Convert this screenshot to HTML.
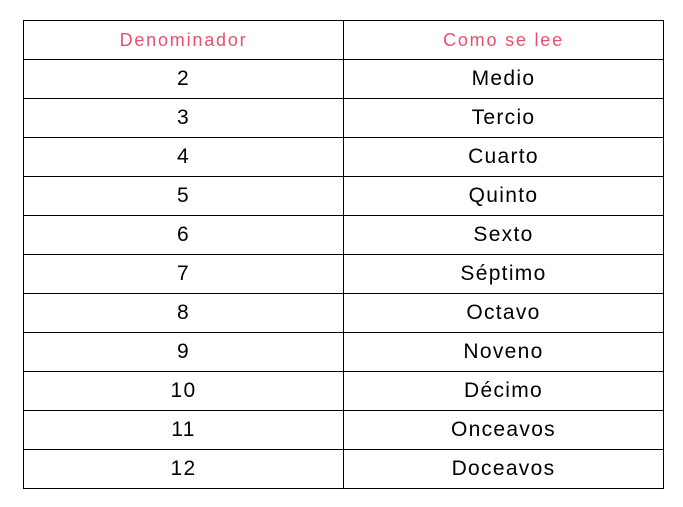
<!DOCTYPE html>
<html><head><meta charset="utf-8"><style>
html,body{margin:0;padding:0;background:#fff;width:683px;height:507px;overflow:hidden}
table{position:absolute;left:23px;top:20px;border-collapse:collapse;font-family:"Comic Sans MS","Liberation Sans",sans-serif}
td{border:1px solid #000;height:38px;padding:0;text-align:center;font-size:21px;color:#000;letter-spacing:1.3px}
td.a{width:319px}td.b{width:319px}
tr.h td{color:#e8506e;font-size:18px;letter-spacing:1.8px}
</style></head><body>
<table>
<tr class="h"><td class="a">Denominador</td><td class="b">Como se lee</td></tr>
<tr><td>2</td><td>Medio</td></tr>
<tr><td>3</td><td>Tercio</td></tr>
<tr><td>4</td><td>Cuarto</td></tr>
<tr><td>5</td><td>Quinto</td></tr>
<tr><td>6</td><td>Sexto</td></tr>
<tr><td>7</td><td>Séptimo</td></tr>
<tr><td>8</td><td>Octavo</td></tr>
<tr><td>9</td><td>Noveno</td></tr>
<tr><td>10</td><td>Décimo</td></tr>
<tr><td>11</td><td>Onceavos</td></tr>
<tr><td>12</td><td>Doceavos</td></tr>
</table>
</body></html>
